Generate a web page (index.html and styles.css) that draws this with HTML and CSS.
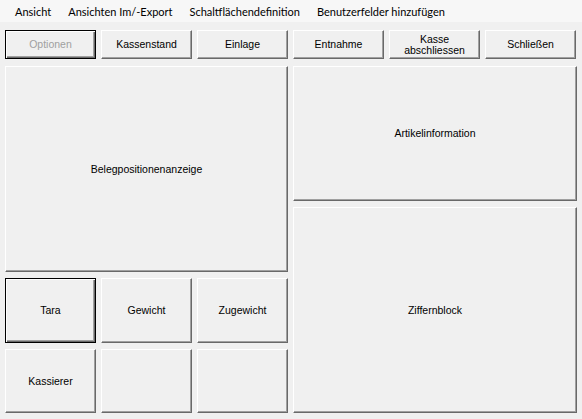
FILE: index.html
```html
<!DOCTYPE html>
<html lang="de">
<head>
  <meta charset="UTF-8">
  <title>Kasse</title>
  <link rel="stylesheet" href="styles.css">
</head>
<body>

  <div class="menubar">
    <span class="menuItem">Ansicht</span>
    <span class="menuItem">Ansichten Im/-Export</span>
    <span class="menuItem">Schaltflächendefinition</span>
    <span class="menuItem">Benutzerfelder hinzufügen</span>
  </div>

  <div class="toolbar">
    <button class="btn focused" disabled>Optionen</button>
    <button class="btn">Kassenstand</button>
    <button class="btn">Einlage</button>
    <button class="btn">Entnahme</button>
    <button class="btn">Kasse<br>abschliessen</button>
    <button class="btn">Schließen</button>
  </div>

  <div class="main">
    <div class="leftCol">
      <div class="btn panel-big">Belegpositionenanzeige</div>
      <div class="keys">
        <button class="btn focused">Tara</button>
        <button class="btn">Gewicht</button>
        <button class="btn">Zugewicht</button>
        <button class="btn">Kassierer</button>
        <button class="btn"></button>
        <button class="btn"></button>
      </div>
    </div>
    <div class="rightCol">
      <div class="btn panel-info">Artikelinformation</div>
      <div class="btn panel-big">Ziffernblock</div>
    </div>
  </div>

</body>
</html>
```

FILE: styles.css
```css
body {
  margin: 0;
  background-color: #f0f0f0;
  font-family: "Liberation Sans", Arial, sans-serif;
  width: 582px;
  height: 419px;
  overflow: hidden;
}

/* menu strip */
.menubar {
  height: 22px;
  background-color: #f7f7f7;
  display: flex;
  align-items: center;
  padding-left: 15px;
  gap: 17px;
  font-family: Lato, "Noto Sans", sans-serif;
  font-size: 11px;
  color: #000;
}

/* classic 3d button */
.btn {
  box-sizing: border-box;
  background-color: #f0f0f0;
  border: 1px solid;
  border-color: #ffffff #696969 #696969 #ffffff;
  box-shadow: inset -1px -1px 0 #a0a0a0;
  font-family: "Liberation Sans", Arial, sans-serif;
  font-size: 10.5px;
  color: #000;
  padding: 0;
  display: flex;
  align-items: center;
  justify-content: center;
  text-align: center;
  line-height: 11px;
}

.btn.focused {
  border: 1px solid #000;
  box-shadow: inset 1px 1px 0 #fff, inset -1px -1px 0 #696969, inset -2px -2px 0 #a0a0a0;
}

.btn:disabled {
  color: #a0a0a0;
}

.toolbar {
  display: grid;
  grid-template-columns: repeat(6, 91px);
  column-gap: 5px;
  height: 29px;
  margin: 8px 0 0 5px;
}

.main {
  display: grid;
  grid-template-columns: 283px 284px;
  column-gap: 5px;
  margin: 7px 0 0 5px;
  height: 347px;
}

.leftCol {
  display: grid;
  grid-template-rows: 206px 1fr;
  row-gap: 6px;
}

.keys {
  display: grid;
  grid-template-columns: repeat(3, 91px);
  grid-template-rows: 65px 64px;
  column-gap: 5px;
  row-gap: 6px;
}

.rightCol {
  display: grid;
  grid-template-rows: 135px 206px;
  row-gap: 6px;
}
```
